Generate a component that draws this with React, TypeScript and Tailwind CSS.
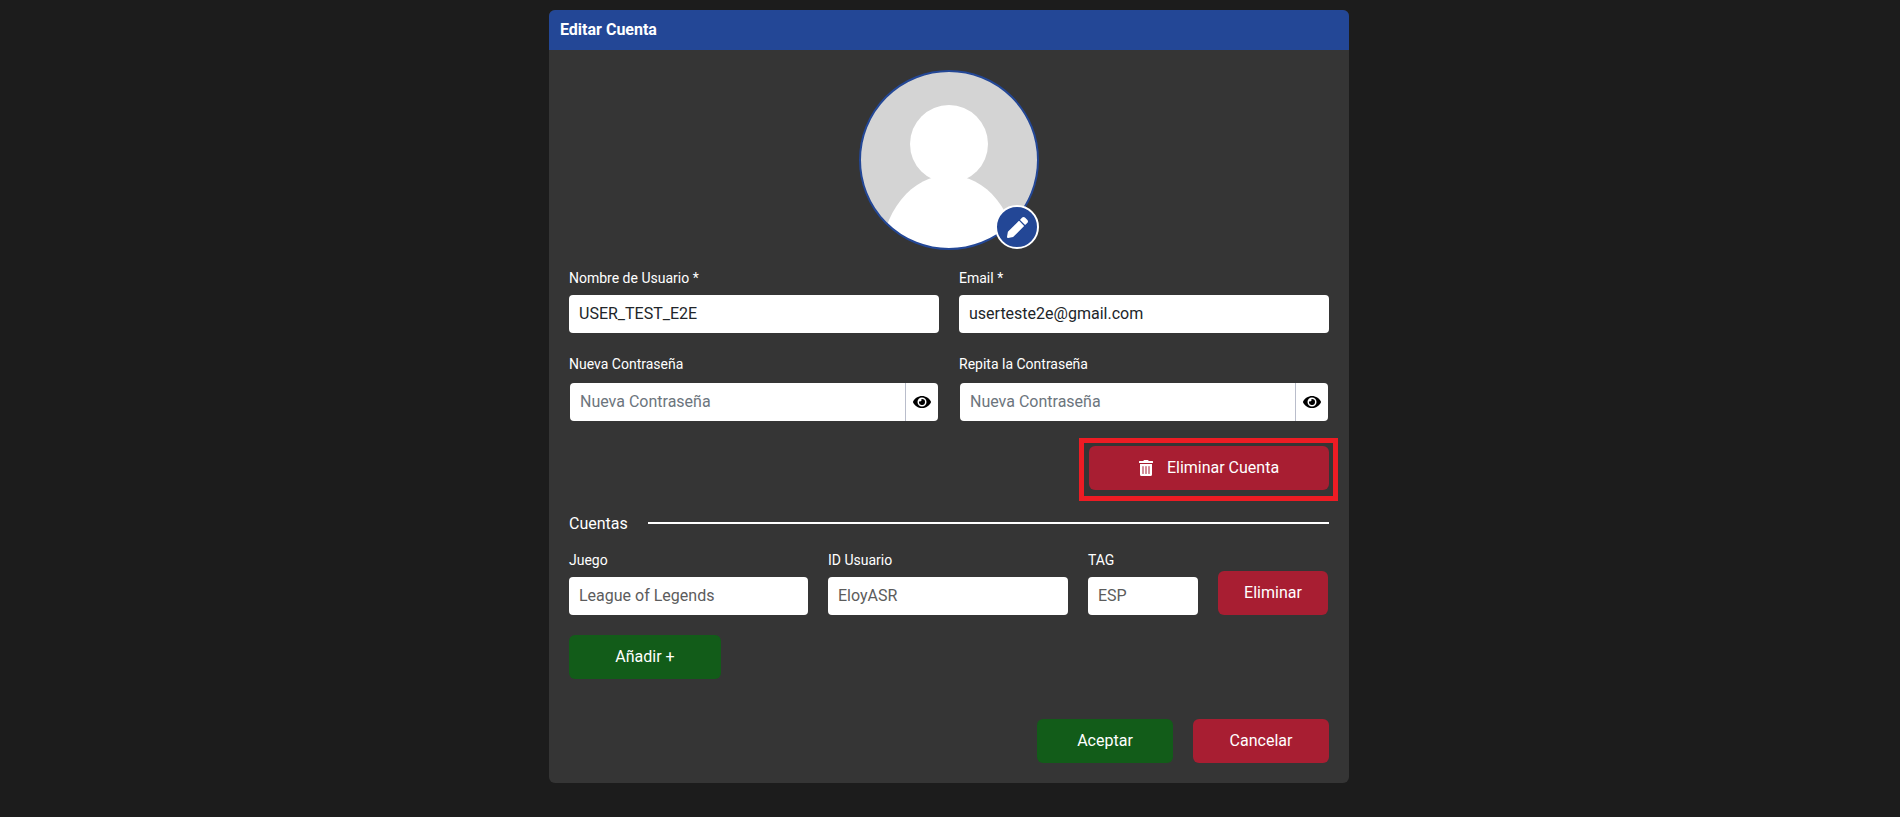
import React from "react";

const font = "font-['Roboto',sans-serif]";
const inputBase = "h-[38px] w-full rounded-[4px] bg-white px-[10px] pb-[1px] text-[16px] outline-none";

function Label({ children, className = "" }: { children: React.ReactNode; className?: string }) {
  return <div className={`text-[14px] leading-[20px] font-normal text-white ${className}`}>{children}</div>;
}

function Eye() {
  return (
    <svg width="18" height="16" viewBox="0 0 576 512" fill="#000">
      <path d="M572.52 241.4C518.29 135.59 410.93 64 288 64S57.68 135.64 3.48 241.41a32.35 32.35 0 0 0 0 29.19C57.71 376.41 165.07 448 288 448s230.32-71.64 284.52-177.41a32.35 32.35 0 0 0 0-29.19zM288 400a144 144 0 1 1 144-144 143.93 143.93 0 0 1-144 144zm0-240a95.31 95.31 0 0 0-25.31 3.79 47.85 47.85 0 0 1-66.9 66.9A95.78 95.78 0 1 0 288 160z" />
    </svg>
  );
}

function PasswordField({ label }: { label: string }) {
  return (
    <div className="flex-1">
      <Label>{label}</Label>
      <div className="mx-px mt-[9px] flex h-[38px] overflow-hidden rounded-[4px] bg-white">
        <input readOnly placeholder="Nueva Contraseña" className="min-w-0 flex-1 px-[10px] pb-[1px] text-[16px] text-[#212529] outline-none placeholder:text-[#6c757d]" />
        <div className="flex w-[33px] items-center justify-center border-l border-[#b9bdcb]"><Eye /></div>
      </div>
    </div>
  );
}

export default function App() {
  return (
    <div className={`${font} flex min-h-[817px] justify-center bg-[#1c1c1c] pt-[10px] pr-[2px]`}>
      <div className="h-[773px] w-[800px] overflow-hidden rounded-[6px] bg-[#353535]">
        <div className="h-[40px] bg-[#234796] px-[11px] text-[16px] font-bold leading-[40px] text-white">Editar Cuenta</div>
        <div className="px-[20px]">
          <div className="flex justify-center pt-[20px]">
            <div className="relative h-[180px] w-[180px]">
              <svg viewBox="0 0 180 180" className="block h-[180px] w-[180px]">
                <defs>
                  <clipPath id="avatar-clip"><circle cx="90" cy="90" r="89" /></clipPath>
                </defs>
                <circle cx="90" cy="90" r="89" fill="#d4d4d4" />
                <g clipPath="url(#avatar-clip)">
                  <circle cx="90" cy="74" r="39" fill="#fff" />
                  <ellipse cx="90" cy="190" rx="68" ry="85" fill="#fff" />
                </g>
                <circle cx="90" cy="90" r="89" fill="none" stroke="#234796" strokeWidth="2" />
              </svg>
              <div className="absolute bottom-[1px] right-0 flex h-[44px] w-[44px] items-center justify-center rounded-full border-2 border-white bg-[#234796]">
                <svg width="21" height="21" viewBox="0 0 512 512" fill="#fff">
                  <path d="M497.9 142.1l-46.1 46.1c-4.7 4.7-12.3 4.7-17 0l-111-111c-4.7-4.7-4.7-12.3 0-17l46.1-46.1c18.7-18.7 49.1-18.7 67.9 0l60.1 60.1c18.8 18.7 18.8 49.1 0 67.9zM284.2 99.8L21.6 362.4.4 483.9c-2.9 16.4 11.4 30.6 27.8 27.8l121.5-21.3 262.6-262.6c4.7-4.7 4.7-12.3 0-17l-111-111c-4.8-4.7-12.4-4.7-17.1 0z" />
                </svg>
              </div>
            </div>
          </div>

          <div className="mt-[18px] flex gap-[20px]">
            <div className="flex-1">
              <Label>Nombre de Usuario *</Label>
              <input readOnly value="USER_TEST_E2E" className={`${inputBase} mt-[7px] text-[#212529]`} />
            </div>
            <div className="flex-1">
              <Label>Email *</Label>
              <input readOnly value="userteste2e@gmail.com" className={`${inputBase} mt-[7px] text-[#212529]`} />
            </div>
          </div>

          <div className="mt-[21px] flex gap-[20px]">
            <PasswordField label="Nueva Contraseña" />
            <PasswordField label="Repita la Contraseña" />
          </div>

          <div className="mt-[25px] flex justify-end">
            <div className="relative">
              <button className="flex h-[44px] w-[240px] items-center justify-center gap-[14px] rounded-[6px] bg-[#a81e32] text-[16px] font-normal text-white">
                <svg width="14" height="16" viewBox="0 0 448 512" fill="#fff">
                  <path d="M32 464a48 48 0 0 0 48 48h288a48 48 0 0 0 48-48V128H32zm272-256a16 16 0 0 1 32 0v224a16 16 0 0 1-32 0zm-96 0a16 16 0 0 1 32 0v224a16 16 0 0 1-32 0zm-96 0a16 16 0 0 1 32 0v224a16 16 0 0 1-32 0zM432 32H312l-9.4-18.7A24 24 0 0 0 281.1 0H166.8a23.72 23.72 0 0 0-21.4 13.3L136 32H16A16 16 0 0 0 0 48v32a16 16 0 0 0 16 16h416a16 16 0 0 0 16-16V48a16 16 0 0 0-16-16z" />
                </svg>
                Eliminar Cuenta
              </button>
              <div className="pointer-events-none absolute -top-[8px] -right-[9px] -bottom-[11px] -left-[10px] border-[5px] border-[#ed1c24]" />
            </div>
          </div>

          <div className="mt-[21px] flex items-center gap-[20px]">
            <div className="pt-[2px] text-[16px] font-normal leading-[22px] text-white">Cuentas</div>
            <div className="h-[2px] flex-1 bg-white" />
          </div>

          <div className="mt-[15px] flex items-end gap-[20px]">
            <div className="w-[239px]">
              <Label>Juego</Label>
              <input readOnly value="League of Legends" className={`${inputBase} mt-[7px] text-[#5c5c5c]`} />
            </div>
            <div className="w-[240px]">
              <Label>ID Usuario</Label>
              <input readOnly value="EloyASR" className={`${inputBase} mt-[7px] text-[#5c5c5c]`} />
            </div>
            <div className="w-[110px]">
              <Label>TAG</Label>
              <input readOnly value="ESP" className={`${inputBase} mt-[7px] text-[#5c5c5c]`} />
            </div>
            <button className="h-[44px] w-[110px] rounded-[6px] bg-[#a81e32] text-[16px] font-normal text-white">Eliminar</button>
          </div>

          <button className="mt-[20px] block h-[44px] w-[152px] rounded-[6px] bg-[#125c19] text-[16px] font-normal text-white">Añadir +</button>

          <div className="mt-[40px] flex justify-end gap-[20px]">
            <button className="h-[44px] w-[136px] rounded-[6px] bg-[#125c19] text-[16px] font-normal text-white">Aceptar</button>
            <button className="h-[44px] w-[136px] rounded-[6px] bg-[#a81e32] text-[16px] font-normal text-white">Cancelar</button>
          </div>
        </div>
      </div>
    </div>
  );
}
